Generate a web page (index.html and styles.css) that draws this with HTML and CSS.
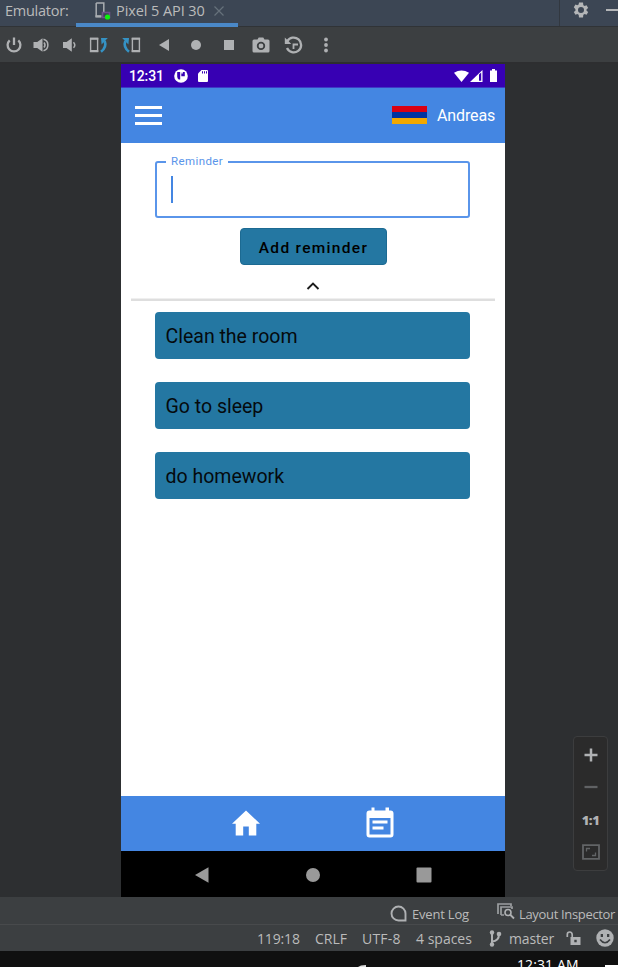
FILE: index.html
```html
<!DOCTYPE html>
<html lang="en">
<head>
<meta charset="utf-8">
<title>Emulator</title>
<link rel="stylesheet" href="styles.css">
</head>
<body>
<div class="window">
  <header class="tabs">
    <span class="tabs-title">Emulator:</span>
    <div class="tab">
      <svg class="tab-icon" width="18" height="20" viewBox="0 0 18 20"><path d="M2.2 2h7.600v9M2.200 2v13.500h5" fill="none" stroke="#a9adb1" stroke-width="1.500"/><path d="M1.500 14.200h6v2.300h-6z" fill="#a9adb1"/><path d="M8.500 11.500h7v5h-7z" fill="none" stroke="#71528b" stroke-width="1.600"/><circle cx="13.500" cy="16" r="2.600" fill="#0df20d"/></svg>
      <span class="tab-label">Pixel 5 API 30</span>
      <svg class="tab-close" width="10" height="10" viewBox="0 0 10 10"><path d="M.5.5l9 9M9.500.5l-9 9" stroke="#66717b" stroke-width="1.200"/></svg>
    </div>
    <div class="tab-actions">
      <svg class="gear" width="18" height="18" viewBox="0 0 24 24"><path fill="#b4b6b8" fill-rule="evenodd" d="M19.400 13a7.500 7.500 0 0 0 0-2l2.200-1.700-2.200-3.700-2.600 1a7.500 7.500 0 0 0-1.700-1L14.700 2H9.300l-.4 2.600a7.500 7.500 0 0 0-1.700 1l-2.600-1-2.200 3.700L4.600 11a7.500 7.500 0 0 0 0 2l-2.200 1.700 2.200 3.700 2.600-1a7.500 7.500 0 0 0 1.700 1l.4 3.600h5.400l.4-3.600a7.500 7.500 0 0 0 1.700-1l2.600 1 2.200-3.700zM12 8a4 4 0 1 1 0 8 4 4 0 0 1 0-8z"/></svg>
      <span class="minimize"></span>
    </div>
  </header>
  <div class="toolbar">
    <svg width="18" height="18" viewBox="0 0 18 18"><path d="M4.700 4.300a6.400 6.400 0 1 0 8.600 0M9 1.500v7.500" fill="none" stroke="#afb1b3" stroke-width="2.300"/></svg>
    <svg width="18" height="18" viewBox="0 0 18 18"><path d="M.5 6h3.700L9.500 2.200v13.600L4.200 12H.5z" fill="#afb1b3"/><path d="M11 6.500q2 2.500 0 5M10.500 3.300a5.900 5.900 0 0 1 0 11.400" fill="none" stroke="#afb1b3" stroke-width="1.500"/></svg>
    <svg width="14" height="18" viewBox="0 0 14 18"><path d="M1 6h3.500L9.800 2.200v13.600L4.500 12H1z" fill="#afb1b3"/><path d="M11.500 6.200q2.600 2.800 0 5.600" fill="none" stroke="#afb1b3" stroke-width="1.500"/></svg>
    <svg width="20" height="18" viewBox="0 0 20 18"><path d="M1.600 2.500h7v13h-7z" fill="none" stroke="#afb1b3" stroke-width="1.400"/><path d="M.9 2.700h8.400M.9 15h8.400" stroke="#afb1b3" stroke-width="2"/><path d="M12 15.800Q18 11 15.700 5" fill="none" stroke="#3592c4" stroke-width="2.600"/><path d="M12 2h6.800L12.600 8.500z" fill="#3592c4"/></svg>
    <svg width="20" height="18" viewBox="0 0 20 18"><path d="M11.400 2.500h7v13h-7z" fill="none" stroke="#afb1b3" stroke-width="1.400"/><path d="M10.700 2.700h8.400M10.700 15h8.400" stroke="#afb1b3" stroke-width="2"/><path d="M8 15.800Q2 11 4.300 5" fill="none" stroke="#3592c4" stroke-width="2.600"/><path d="M8 2H1.200L7.400 8.500z" fill="#3592c4"/></svg>
    <svg width="12" height="12" viewBox="0 0 12 12"><path d="M11 0v12L1 6z" fill="#afb1b3"/></svg>
    <svg width="10" height="10" viewBox="0 0 10 10"><circle cx="5" cy="5" r="5" fill="#afb1b3"/></svg>
    <svg width="10" height="10" viewBox="0 0 10 10"><rect width="10" height="10" fill="#afb1b3"/></svg>
    <svg width="18" height="16" viewBox="0 0 18 16"><path fill="#afb1b3" fill-rule="evenodd" d="M2 2.500h3.500L6.700.5h4.600l1.200 2H16q1.500 0 1.500 1.500v10q0 1.500-1.500 1.500H2Q.5 15.500.5 14V4Q.5 2.500 2 2.500zM9 4.700a4.200 4.200 0 1 0 0 8.400 4.200 4.200 0 0 0 0-8.400zM9 6.500a2.400 2.400 0 1 1 0 4.800 2.400 2.400 0 0 1 0-4.800z"/></svg>
    <svg width="19" height="18" viewBox="0 0 19 18"><path d="M3.200 5.500A7.400 7.400 0 1 1 3 12" fill="none" stroke="#afb1b3" stroke-width="2.300"/><path d="M.8 1.500v6.500h6.500z" fill="#afb1b3"/><path d="M14 8.500H9.500V13" fill="none" stroke="#afb1b3" stroke-width="1.800"/></svg>
    <svg width="4" height="16" viewBox="0 0 4 16"><circle cx="2" cy="2.500" r="1.900" fill="#afb1b3"/><circle cx="2" cy="8" r="1.900" fill="#afb1b3"/><circle cx="2" cy="13.500" r="1.900" fill="#afb1b3"/></svg>
  </div>

  <main class="stage">
    <section class="phone">
      <div class="status">
        <span class="clock">12:31</span>
        <svg class="status-p" width="14" height="14" viewBox="0 0 14 14"><circle cx="7" cy="7" r="6.800" fill="#fff"/><path d="M3.200 3h3v7.600h-1.500q-1.500-1-1.500-3zM7.300 3h3.500v4.200H7.300z" fill="#3700b3"/><path d="M7.200 3h1.600v1.600H7.200z" fill="#fff"/></svg>
        <svg class="status-sd" width="10" height="12" viewBox="0 0 10 12"><path d="M3.500 0H9q1 0 1 1v10q0 1-1 1H1q-1 0-1-1V3.500z" fill="#fff"/><path d="M4 1.300h1v2.300H4zM6 1.300h1v2.300H6zM8 1.300h1v2.300H8z" fill="#3700b3"/></svg>
        <div class="signals">
          <svg width="15" height="12" viewBox="0 0 15 12"><path d="M0 2.800Q7.500-2 15 2.800L7.500 12z" fill="#fff"/></svg>
          <svg width="13" height="12" viewBox="0 0 13 12"><path d="M0 12L12.500 0v12z" fill="#fff"/><path d="M9 4.500l2.200-2v8.300H9z" fill="#3700b3"/></svg>
          <svg class="battery" width="7" height="13" viewBox="0 0 7 13"><path d="M0 1.500h2V0h3v1.500h2V13H0z" fill="#fff"/></svg>
        </div>
      </div>
      <div class="appbar">
        <div class="burger"><i></i><i></i><i></i></div>
        <div class="flag"></div>
        <span class="user">Andreas</span>
      </div>
      <div class="content">
        <fieldset class="field"><legend>Reminder</legend><div class="caret"></div></fieldset>
        <button class="add">Add reminder</button>
        <svg class="chevron" width="14" height="10" viewBox="0 0 14 10"><path d="M1.500 8L7 2.500 12.500 8" fill="none" stroke="#1c1c1c" stroke-width="1.900"/></svg>
        <div class="divider"></div>
        <ul class="list">
          <li>Clean the room</li>
          <li>Go to sleep</li>
          <li>do homework</li>
        </ul>
      </div>
      <nav class="appnav">
        <svg width="30" height="26" viewBox="0 0 30 26"><path d="M15 .5L29 13.700h-3.700V25.500h-7.500v-9h-5.600v9H4.700V13.700H1z" fill="#fff"/></svg>
        <svg width="28" height="31" viewBox="0 0 28 31"><path fill="#fff" fill-rule="evenodd" d="M5.500.5h3v3h11v-3H23v3h1.500q3 0 3 3v21q0 3-3 3h-21q-3 0-3-3v-21q0-3 3-3h2zM3.500 11v16.500h21V11z"/><path d="M6.500 13.500h15v3h-15zM6.500 19.500h11v3h-11z" fill="#fff"/></svg>
      </nav>
      <div class="sysnav">
        <svg width="16" height="16" viewBox="0 0 16 16"><path d="M14.500.3v15.400L1 8z" fill="#999"/></svg>
        <svg width="16" height="16" viewBox="0 0 16 16"><circle cx="8" cy="8" r="7" fill="#999"/></svg>
        <svg width="16" height="16" viewBox="0 0 16 16"><rect x=".5" y=".5" width="15" height="15" rx="1" fill="#999"/></svg>
      </div>
    </section>
    <aside class="zoom">
      <svg width="14" height="14" viewBox="0 0 14 14"><path d="M7 .5v13M.5 7h13" stroke="#b0b2b4" stroke-width="2.500"/></svg>
      <svg width="14" height="14" viewBox="0 0 14 14"><path d="M.5 7h13" stroke="#606264" stroke-width="2.300"/></svg>
      <span class="ratio">1:1</span>
      <svg width="18" height="16" viewBox="0 0 18 16"><path d="M1 1.200h16v13.600H1z" fill="none" stroke="#626466" stroke-width="1.800"/><path d="M4.500 7.500v-3h3.500M13.500 8.500v3H10" fill="none" stroke="#626466" stroke-width="1.300"/></svg>
    </aside>
  </main>

  <div class="tools">
    <svg width="17" height="17" viewBox="0 0 17 17"><path d="M15.500 15.500H8.500a7 7 0 1 1 7-7z" fill="none" stroke="#afb1b3" stroke-width="1.900"/></svg>
    <span class="event">Event Log</span>
    <svg class="inspector-icon" width="18" height="17" viewBox="0 0 18 17"><path d="M1 11V1h13v2M4 12V4h11v2M4 12h3" fill="none" stroke="#9c9fa1" stroke-width="1.700"/><circle cx="11" cy="9.500" r="3" fill="none" stroke="#afb1b3" stroke-width="1.600"/><path d="M13 11.500l4 4" stroke="#afb1b3" stroke-width="1.800"/></svg>
    <span class="inspector">Layout Inspector</span>
  </div>
  <div class="info">
    <span class="pos">119:18</span>
    <span class="crlf">CRLF</span>
    <span class="utf">UTF-8</span>
    <span class="indent">4 spaces</span>
    <svg class="branch-icon" width="13" height="17" viewBox="0 0 13 17"><path d="M3 2v13M3 11.500Q10 11 10 4" fill="none" stroke="#afb1b3" stroke-width="2"/><circle cx="3" cy="2.500" r="2.200" fill="#afb1b3"/><circle cx="3" cy="14.500" r="2.200" fill="#afb1b3"/><circle cx="10" cy="4" r="2.300" fill="#afb1b3"/></svg>
    <span class="branch">master</span>
    <svg class="lock" width="15" height="14" viewBox="0 0 15 14"><path d="M1.300 6V3.700Q1.300 1 3.700 1T6.200 3.700V6" fill="none" stroke="#afb1b3" stroke-width="1.700"/><path fill="#afb1b3" fill-rule="evenodd" d="M4.500 6H14.500v8H4.500zM8.300 8.800v2.400h2.400V8.800z"/></svg>
    <svg class="smile" width="18" height="18" viewBox="0 0 18 18"><circle cx="9" cy="9" r="8.700" fill="#afb1b3"/><path d="M4.700 5h2.300v3H4.700zM11 5h2.300v3H11z" fill="#3c3f41"/><path d="M4 10.500q5 6.500 10 0" fill="none" stroke="#3c3f41" stroke-width="1.700"/></svg>
  </div>
  <footer class="taskbar">
    <svg class="task-mark" width="8" height="2" viewBox="0 0 8 2"><path d="M0 2L3 .5 8 0v2z" fill="#ddd"/></svg>
    <span class="task-time">12:31 AM</span>
    <span class="task-note"></span>
  </footer>
</div>
</body>
</html>
```

FILE: styles.css
```css
* { box-sizing: border-box; }
body { margin: 0; background: #2b2d2f; }
svg { display: block; flex: none; }
.window {
  width: 618px; height: 967px; overflow: hidden;
  display: flex; flex-direction: column;
  font-family: "Open Sans", "Noto Sans", sans-serif; color: #bbb;
}
.window span { white-space: nowrap; }

.tabs { height: 27px; flex: none; display: flex; background: #3c4654; border-bottom: 1px solid #303336; font-size: 14.5px; }
.tabs-title { width: 76px; padding-left: 5px; line-height: 21px; letter-spacing: -.25px; }
.tab { width: 162px; height: 27px; display: flex; align-items: flex-start; border-bottom: 4px solid #4a88c7; }
.tab-icon { margin: 1px 4px 0 18px; }
.tab-label { width: 98px; line-height: 21px; letter-spacing: -.08px; }
.tab-close { margin-top: 6px; }
.tab-actions { margin-left: auto; width: 59px; display: flex; border-left: 1px solid #323840; }
.gear { margin: 1px 0 0 12px; }
.minimize { width: 12px; height: 2px; margin: 9px 0 0 16px; background: #b4b6b8; flex: none; }

.toolbar {
  height: 37px; flex: none; display: grid; align-items: center; justify-items: center;
  grid-template-columns: 28px 27px 28px 32px 32px 33px 32px 33px 32px 33px 32px;
  background: #3c3f41; border-bottom: 2px solid #2d2e30;
}

.stage { height: 833px; flex: none; display: flex; align-items: flex-start; padding-left: 121px; background: #2d2f31; }
.phone { width: 384px; height: 833px; display: flex; flex-direction: column; background: #fff; font-family: Roboto, sans-serif; }
.status { height: 24px; flex: none; display: flex; align-items: center; padding: 0 8px; background: #3700b3; color: #fff; border-bottom: 1px solid #3f3ac6; }
.clock { width: 45px; font-size: 14px; font-weight: 500; line-height: 24px; letter-spacing: -.15px; }
.status-sd { margin-left: 10px; }
.signals { margin-left: auto; display: flex; align-items: center; gap: 1px; }
.battery { margin-left: 6px; }

.appbar { height: 55px; flex: none; display: flex; align-items: center; padding: 0 10px 0 14px; background: #4486e2; }
.burger { width: 27px; display: grid; gap: 5px; }
.burger i { height: 2.700px; background: #fff; }
.flag { width: 35px; height: 18px; margin: -1px 10px 0 auto; background: linear-gradient(#d90012 0 6px, #0033a0 6px 12px, #f2a800 12px); }
.user { color: #fff; font-size: 16px; line-height: 20px; width: 58px; padding-top: 1px; letter-spacing: -.12px; }

.content { height: 653px; flex: none; display: flex; flex-direction: column; align-items: center; }
.field {
  width: 315px; height: 63px; margin: 12px 1px 0 0; padding: 0 0 0 14px;
  border: 2px solid #5a95ea; border-radius: 3px;
}
.field legend { margin-left: -5px; padding: 0 5px; color: #5a95ea; font-size: 11.5px; line-height: 13px; letter-spacing: .4px; }
.caret { width: 2px; height: 27px; margin-top: 8px; background: #4486e2; }
.add {
  width: 147px; height: 37px; margin-top: 10px; padding: 2px 0 0 1px; border: 1px solid #1c6a92; border-radius: 4px;
  background: #2477a2; color: #000; font: 500 15.500px/20px Roboto, sans-serif; letter-spacing: 1.300px;
}
.chevron { margin-top: 16px; }
.divider { width: 364px; height: 3px; margin-top: 7px; background: #dedede; border-top: 1px solid #efefef; }
.list { width: 315px; margin: 11px 1px 0 0; padding: 0; list-style: none; display: grid; gap: 23px; }
.list li { height: 47px; padding: 2px 10.500px 0; border-radius: 4px; background: #2477a2; color: #050a0d; font-size: 19.500px; line-height: 46px; }

.appnav { height: 55px; flex: none; display: flex; align-items: center; gap: 105px; padding: 0 0 2px 110px; background: #4486e2; }
.sysnav { height: 46px; flex: none; display: flex; align-items: center; gap: 95px; padding: 1px 0 0 73px; background: #000; }

.zoom {
  width: 35px; height: 135px; margin: 672px 0 0 68px; padding-top: 11px;
  display: flex; flex-direction: column; align-items: center; gap: 18px;
  background: #2b2b2b; border: 1px solid #3c3d3e; border-radius: 4px;
}
.ratio { height: 14px; font: 800 13px/16px "Open Sans", sans-serif; color: #b0b2b4; letter-spacing: -.5px; }

.tools { height: 28px; flex: none; display: flex; align-items: center; padding: 5px 0 0 390px; background: #3c3f41; border-bottom: 1px solid #484a4c; font-size: 13px; }
.event { width: 86px; padding: 2px 0 0 5px; letter-spacing: -.2px; }
.inspector-icon { margin: -3px 4px 0 4px; }
.inspector { padding-top: 2px; letter-spacing: -.33px; }
.info { height: 26px; flex: none; display: flex; align-items: center; padding-left: 257px; background: #3c3f41; font-size: 14px; }
.pos { width: 58px; letter-spacing: -.15px; }
.crlf { width: 47px; }
.utf { width: 54px; letter-spacing: .2px; }
.indent { width: 73px; letter-spacing: 0; }
.branch-icon { margin-right: 7px; }
.branch { width: 57px; letter-spacing: -.15px; }
.lock { margin-right: 15px; }
.taskbar { height: 16px; flex: none; display: flex; align-items: flex-start; overflow: hidden; background: #101010; }
.task-mark { margin: 14px 0 0 358px; }
.task-time { width: 88px; margin: 4px 0 0 151px; color: #fff; font-size: 14px; line-height: 19px; letter-spacing: .1px; }
.task-note { width: 13px; height: 2px; margin-top: 14px; background: #fff; }
```
